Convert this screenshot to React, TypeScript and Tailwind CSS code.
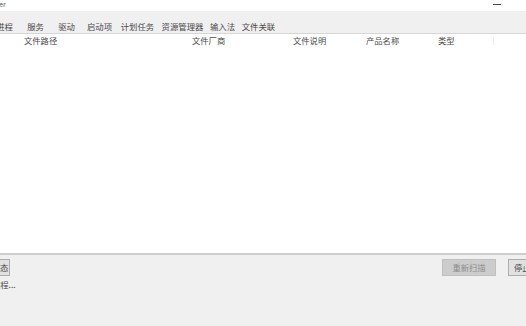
const tabs = [
  { label: "进程", w: "w-[31px]" },
  { label: "服务", w: "w-[31px]" },
  { label: "驱动", w: "w-[31px]" },
  { label: "启动项", w: "w-[35px]" },
  { label: "计划任务", w: "w-[41px]" },
  { label: "资源管理器", w: "w-[49px]" },
  { label: "输入法", w: "w-[31px]" },
  { label: "文件关联", w: "w-[41px]" },
];

const columns = [
  { label: "文件路径", w: "w-[168px]" },
  { label: "文件厂商", w: "w-[101px]" },
  { label: "文件说明", w: "w-[73px]" },
  { label: "产品名称", w: "w-[72px]" },
  { label: "类型", w: "w-[55px]" },
];

export default function App() {
  return (
    <div className="w-[526px] h-[326px] overflow-hidden bg-[#f0f0f0] flex flex-col text-[#4a4a4a] font-['Noto_Sans_CJK_SC','Noto_Sans',sans-serif]">
      {/* title bar */}
      <div className="h-[11px] bg-white flex items-start justify-between shrink-0">
        <span className="text-[7px] leading-[8px] text-[#555] -ml-[1px]">er</span>
        <div className="w-[8px] h-[1px] bg-[#444] mt-[4px] mr-[25px]" />
      </div>

      {/* tabs */}
      <div className="h-[23px] shrink-0 flex items-end border-b border-[#d6d6d6] pb-[1px]">
        <div className="flex -ml-[11px]">
          {tabs.map((t) => (
            <div key={t.label} className={`${t.w} h-[12px] flex items-center justify-center whitespace-nowrap text-[8.4px] leading-none`}>
              {t.label}
            </div>
          ))}
        </div>
      </div>

      {/* list */}
      <div className="flex-1 bg-white border-b-2 border-[#cdcdcd]">
        <div className="flex h-[13px] items-center pl-[24px] text-[8.3px] leading-none">
          {columns.map((c) => (
            <div key={c.label} className={`${c.w} shrink-0 whitespace-nowrap`}>
              {c.label}
            </div>
          ))}
          <div className="w-[1px] h-[8px] bg-[#ececec]" />
        </div>
      </div>

      {/* bottom panel */}
      <div className="h-[71px] shrink-0 flex justify-between items-start pt-[4px]">
        <div className="flex flex-col gap-[4px]">
          <div className="w-[20px] h-[17px] -ml-[10px] border border-[#adadad] bg-[#e1e1e1] flex items-center justify-center text-[8.3px] whitespace-nowrap">
            状态
          </div>
          <div className="-ml-[8px] text-[8.3px] leading-none whitespace-nowrap">进程...</div>
        </div>
        <div className="flex gap-[12px] -mr-[36px]">
          <div className="w-[54px] h-[17px] bg-[#cccccc] border border-[#bfbfbf] flex items-center justify-center text-[8.3px] text-[#8c8c8c]">
            重新扫描
          </div>
          <div className="w-[54px] h-[17px] bg-[#e1e1e1] border border-[#adadad] flex items-center justify-start pl-[5px] text-[8.3px]">
            停止
          </div>
        </div>
      </div>
    </div>
  );
}
